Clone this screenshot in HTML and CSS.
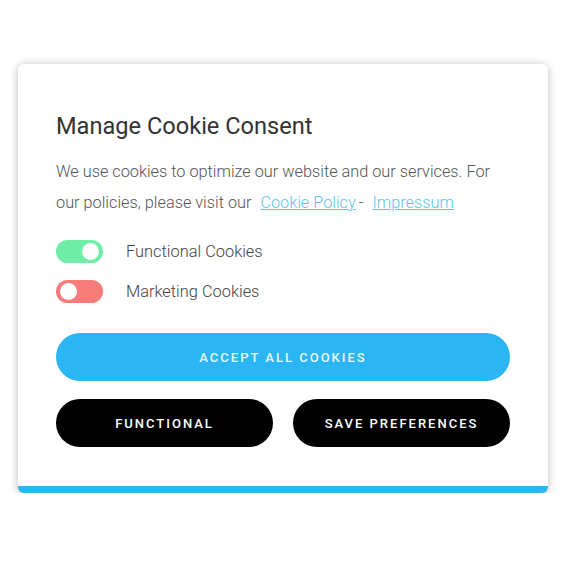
FILE: index.html
```html
<!DOCTYPE html>
<html lang="en">
<head>
    <meta charset="UTF-8">
    <meta name="viewport" content="width=device-width, initial-scale=1.0">
    <title>Manage Cookie Consent</title>
    <link rel="stylesheet" href="styles.css">
</head>
<body>
    <!-- cookie consent box -->
    <div id="consent">
        <h2 class="consent-title">Manage Cookie Consent</h2>
        <p class="consent-text">We use cookies to optimize our website and our services. For our policies, please visit our <a href="#">Cookie Policy</a>- <a href="#">Impressum</a></p>

        <div class="options">
            <label class="option">
                <span class="toggle on"><span class="knob"></span></span>
                <span class="option-label">Functional Cookies</span>
            </label>
            <label class="option">
                <span class="toggle off"><span class="knob"></span></span>
                <span class="option-label">Marketing Cookies</span>
            </label>
        </div>

        <button class="btn btn-accept">Accept all cookies</button>
        <div class="btn-row">
            <button class="btn btn-dark">Functional</button>
            <button class="btn btn-dark">Save preferences</button>
        </div>
    </div>
</body>
</html>
```

FILE: styles.css
```css
body {
    font-family: Roboto, "Liberation Sans", sans-serif;
    margin: 0;
    padding: 64px 19px 0 18px;
    background: #ffffff;
}

#consent {
    background: #ffffff;
    border-radius: 6px;
    border-bottom: 7px solid #2bb5f2;
    box-shadow: 0 1px 8px rgba(0, 0, 0, 0.28);
    padding: 49px 38px 39px 38px;
}

.consent-title {
    margin: 0;
    font-size: 23.6px;
    font-weight: 400;
    line-height: 26px;
    color: #333333;
}

.consent-text {
    margin: 17px 0 0 0;
    font-size: 16.3px;
    font-weight: 300;
    line-height: 31px;
    color: #555555;
}

.consent-text a {
    color: #5bc6ea;
    margin: 0 3px 0 5px;
}

.options {
    display: flex;
    flex-direction: column;
    gap: 17px;
    margin-top: 22px;
}

.option {
    display: flex;
    align-items: center;
    height: 23px;
}

.toggle {
    width: 47px;
    height: 23px;
    border-radius: 12px;
    display: flex;
    align-items: center;
    padding: 0 4px;
    box-sizing: border-box;
}

.toggle.on {
    background: #70eda6;
    justify-content: flex-end;
}

.toggle.off {
    background: #f87b7b;
}

.knob {
    width: 17px;
    height: 17px;
    border-radius: 50%;
    background: #ffffff;
}

.option-label {
    margin-left: 23px;
    font-size: 16.4px;
    font-weight: 300;
    color: #444444;
}

.btn {
    display: block;
    border: none;
    height: 48px;
    border-radius: 24px;
    font-family: Roboto, "Liberation Sans", sans-serif;
    font-size: 13px;
    font-weight: 500;
    letter-spacing: 2px;
    text-transform: uppercase;
    color: #ffffff;
    cursor: pointer;
}

.btn-accept {
    width: 100%;
    margin-top: 30px;
    background: #2bb5f2;
    color: #eaf7fd;
}

.btn-row {
    display: flex;
    gap: 20px;
    margin-top: 18px;
}

.btn-dark {
    flex: 1;
    background: #000000;
}
```
